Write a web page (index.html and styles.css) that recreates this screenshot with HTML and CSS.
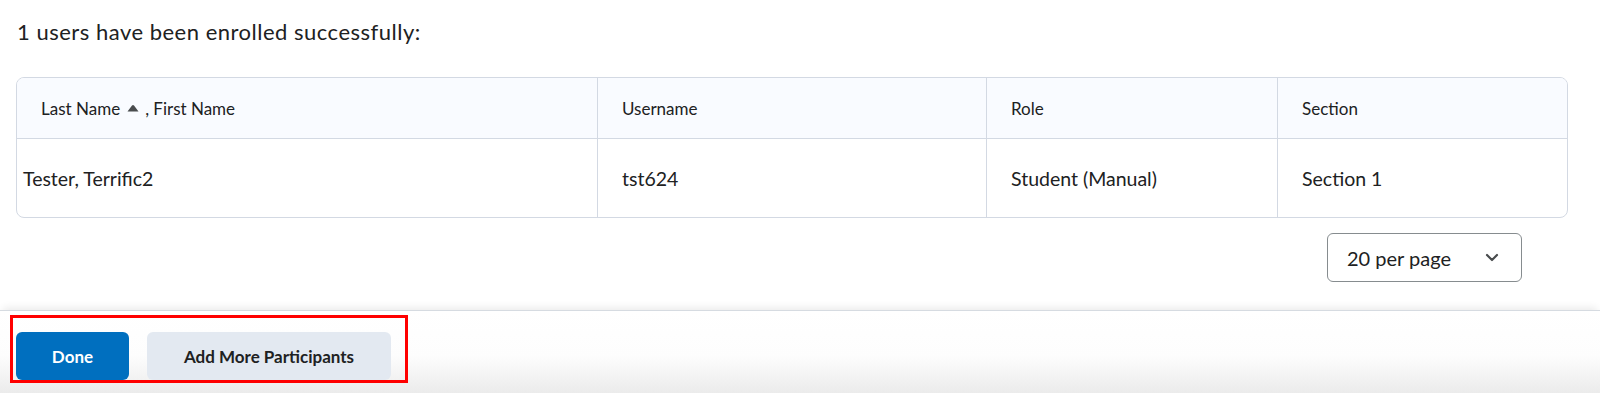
FILE: index.html
```html
<!DOCTYPE html>
<html>

<head>
    <meta charset="utf-8">
    <link rel="stylesheet" href="styles.css">
</head>

<body>
    <div class="page">
        <p class="summary">1 users have been enrolled successfully:</p>

        <div class="grid">
            <div class="cell head first">
                Last Name
                <svg class="sort" width="14" height="8" viewBox="0 0 14 8">
                    <path d="M1.5 7.5 L6 1.6 Q7 0.5 8 1.6 L12.5 7.5 Z" fill="#494c4e" />
                </svg>
                , First Name
            </div>
            <div class="cell head">Username</div>
            <div class="cell head">Role</div>
            <div class="cell head">Section</div>

            <div class="cell body first">Tester, Terrific2</div>
            <div class="cell body">tst624</div>
            <div class="cell body">Student (Manual)</div>
            <div class="cell body">Section 1</div>
        </div>

        <div class="pager">
            <div class="per-page">
                <span>20 per page</span>
                <svg width="14" height="9" viewBox="0 0 14 9">
                    <path d="M2 2 L7 7 L12 2" fill="none" stroke="#494c4e" stroke-width="2.2" stroke-linecap="round" stroke-linejoin="round" />
                </svg>
            </div>
        </div>
    </div>

    <div class="footer">
        <button class="btn primary">Done</button>
        <button class="btn secondary">Add More Participants</button>
        <div class="highlight"></div>
    </div>
</body>

</html>
```

FILE: styles.css
```css
html, body {
    margin: 0;
    height: 100%;
    overflow: hidden;
}

body {
    font-family: Lato, "Noto Sans", sans-serif;
    color: #202122;
    background: #fff;
    display: flex;
    flex-direction: column;
}

.page {
    padding: 0 32px 0 16px;
    flex: 1;
}

.summary {
    margin: 16px 0 30px 1px;
    font-size: 22px;
    letter-spacing: 0.5px;
    line-height: 31px;
}

.grid {
    display: grid;
    grid-template-columns: 580px 389px 291px 1fr;
    border: 1px solid #d3d9e3;
    border-radius: 8px;
    overflow: hidden;
}

.cell {
    display: flex;
    align-items: center;
    padding-left: 24px;
    border-left: 1px solid #d3d9e3;
}

.cell.first {
    border-left: none;
}

.head {
    height: 60px;
    background: #f9fbff;
    border-bottom: 1px solid #d3d9e3;
    font-size: 17px;
    color: #202122;
}

.head .sort {
    margin: 0 5px 0 6px;
}

.body {
    height: 78px;
    font-size: 19.5px;
}

.body.first {
    padding-left: 6px;
}

.pager {
    display: flex;
    justify-content: flex-end;
    padding: 15px 46px 0 0;
}

.per-page {
    box-sizing: border-box;
    width: 195px;
    height: 49px;
    border: 1px solid #868c8f;
    border-radius: 6px;
    display: flex;
    align-items: center;
    justify-content: space-between;
    padding: 0 22px 0 19px;
    font-size: 20px;
}

.footer {
    position: relative;
    height: 83px;
    box-sizing: border-box;
    border-top: 1px solid #d6dbe1;
    box-shadow: 0 -5px 8px -3px rgba(0, 0, 0, 0.09);
    background: linear-gradient(#fff 0%, #fdfdfd 55%, #ebebeb 100%);
    padding: 21px 0 0 16px;
    display: flex;
    align-items: flex-start;
    gap: 18px;
}

.btn {
    height: 48px;
    border: none;
    border-radius: 6px;
    font-family: Lato, "Noto Sans", sans-serif;
    font-weight: bold;
    font-size: 17px;
    padding: 0;
}

.primary {
    width: 113px;
    background: #006fbf;
    color: #fff;
}

.secondary {
    width: 244px;
    background: #e3e9f1;
    color: #202122;
}

.highlight {
    position: absolute;
    left: 10px;
    top: 4px;
    width: 398px;
    height: 68px;
    box-sizing: border-box;
    border: 3px solid #ff0000;
}
```
